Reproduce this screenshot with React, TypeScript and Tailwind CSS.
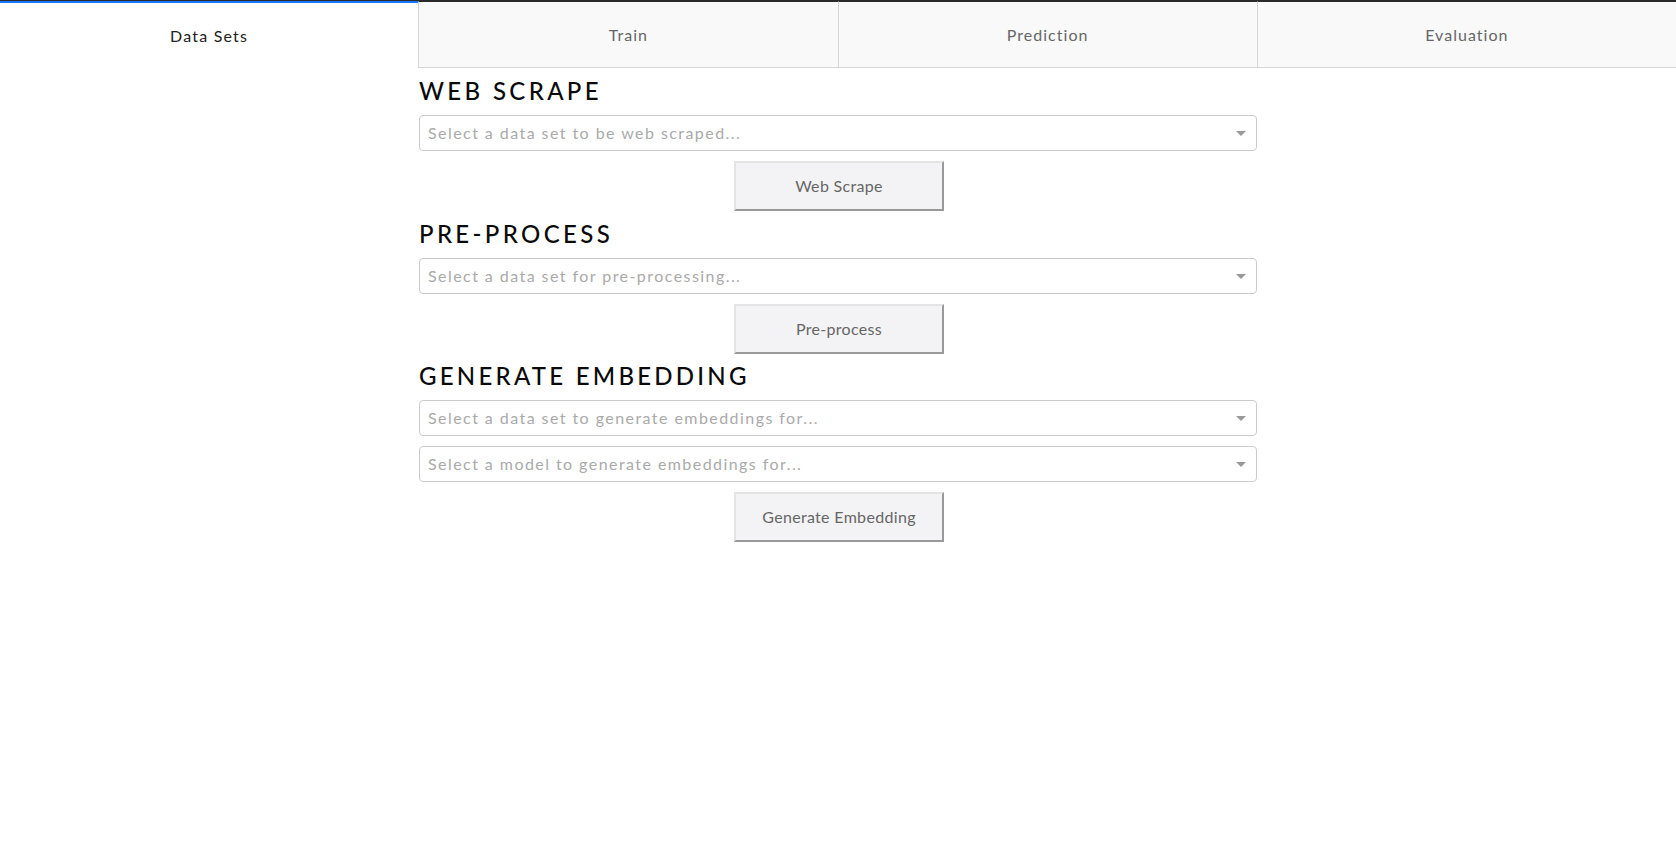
import React from "react";

function Caret() {
  return (
    <svg width="10" height="5" viewBox="0 0 10 5" className="shrink-0">
      <path d="M0 0 L10 0 L5 5 Z" fill="#999999" />
    </svg>
  );
}

function Dropdown({ placeholder }: { placeholder: string }) {
  return (
    <div className="mb-[10px] flex h-[36px] items-center justify-between rounded-[4px] border border-[#cccccc] bg-white pl-[8px] pr-[10px]">
      <span className="text-[16px] tracking-[0.09em] text-[#aaaaaa]">{placeholder}</span>
      <Caret />
    </div>
  );
}

function ActionButton({ label }: { label: string }) {
  return (
    <div className="ml-[315px] flex h-[50px] w-[210px] items-center justify-center border-2 border-b-[#999999] border-l-[#e4e4e4] border-r-[#999999] border-t-[#e4e4e4] bg-[#f3f3f5] text-[16px] tracking-[0.02em] text-[#666666]">
      {label}
    </div>
  );
}

function Heading({ children, tight }: { children: React.ReactNode; tight?: boolean }) {
  return (
    <h2
      className={
        tight
          ? "mb-[10px] mt-[8px] text-[24px] font-medium leading-[28px] tracking-[0.135em] text-[#0a0a0a]"
          : "mb-[10px] mt-[9px] text-[24px] font-medium leading-[28px] tracking-[0.14em] text-[#0a0a0a]"
      }
    >
      {children}
    </h2>
  );
}

export default function App() {
  const tabs = ["Train", "Prediction", "Evaluation"];
  return (
    <div className="min-h-[865px] bg-white font-['Lato','Noto_Sans',sans-serif]">
      <div className="h-px bg-[#2a2a2a]" />
      <div className="flex h-[67px]">
        <div className="flex flex-1 items-center justify-center border-t-2 border-[#1975fa] text-[16px] tracking-[0.075em] text-[#222222]">
          Data Sets
        </div>
        {tabs.map((t) => (
          <div
            key={t}
            className="flex flex-1 items-center justify-center border-b border-l border-t border-b-[#d6d6d6] border-l-[#d6d6d6] border-t-[#2a2a2a] bg-[#f9f9f9] text-[16px] tracking-[0.065em] text-[#666666]"
          >
            {t}
          </div>
        ))}
      </div>
      <div className="mx-auto w-1/2">
        <Heading>WEB SCRAPE</Heading>
        <Dropdown placeholder="Select a data set to be web scraped..." />
        <ActionButton label="Web Scrape" />
        <Heading>PRE-PROCESS</Heading>
        <Dropdown placeholder="Select a data set for pre-processing..." />
        <ActionButton label="Pre-process" />
        <Heading tight>GENERATE EMBEDDING</Heading>
        <Dropdown placeholder="Select a data set to generate embeddings for..." />
        <Dropdown placeholder="Select a model to generate embeddings for..." />
        <ActionButton label="Generate Embedding" />
      </div>
    </div>
  );
}
